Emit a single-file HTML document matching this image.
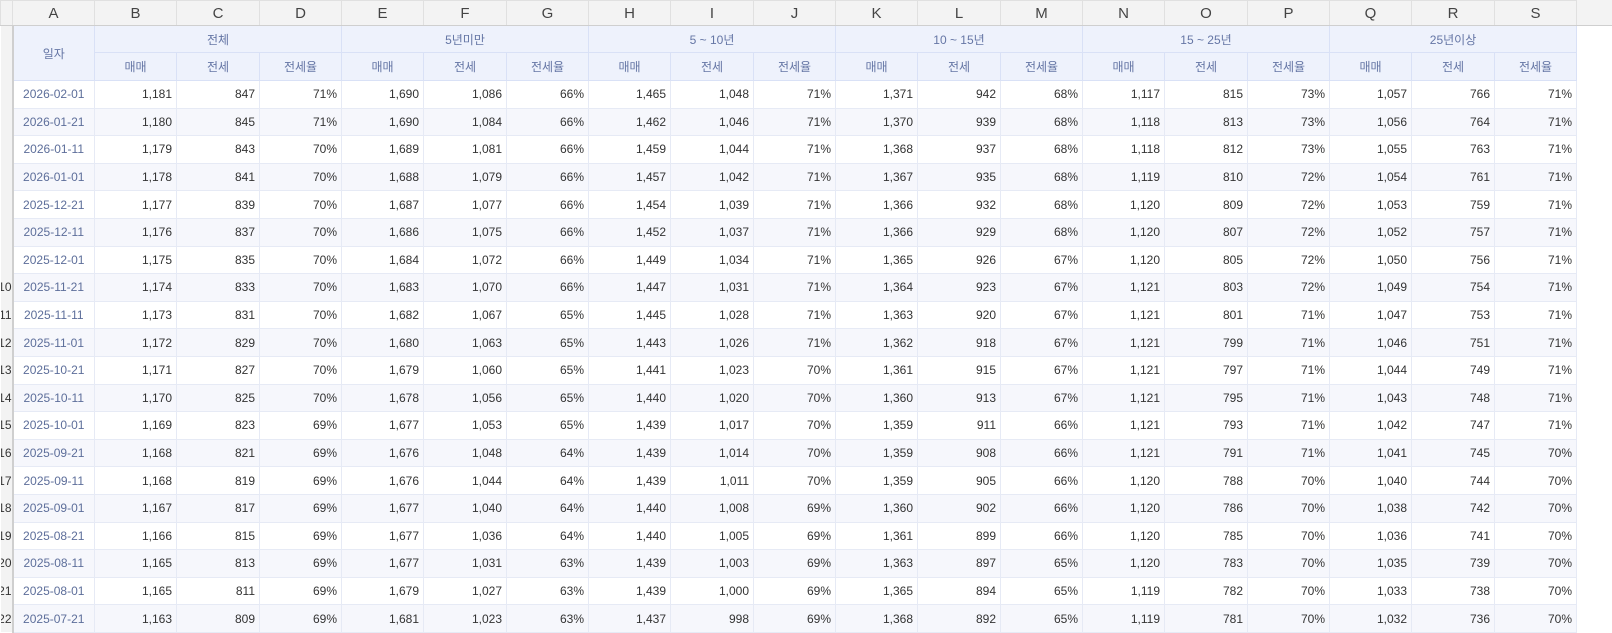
<!DOCTYPE html>
<html><head><meta charset="utf-8"><style>
body{margin:0;width:1612px;height:622px;overflow:hidden;background:#fff;font-family:"Liberation Sans","Noto Sans CJK KR",sans-serif;}
table{border-collapse:collapse;table-layout:fixed;width:1576px;position:absolute;left:0;top:0}
td{padding:0 4px;font-size:12px;color:#333;border:1px solid #e6eaf5;white-space:nowrap;overflow:hidden;text-align:right}
tr.L td{background:#f3f3f3;color:#444;font-size:15px;text-align:center;border:1px solid #e0e0e0;border-bottom:1px solid #cfcfcf;height:24px}
td.rn{background:#f3f3f3;border:none;border-right:2px solid #cfcfcf;padding:0;text-align:right;font-size:12px;color:#333;overflow:hidden;direction:rtl}
tr.h td{background:#eef2fc;color:#6576a5;text-align:center;font-size:12px;border:1px solid #d9e1f6;height:26px}
tr.h td.rn{background:#f3f3f3;border:none;border-right:2px solid #cfcfcf}
tr.d td{height:26.6px}
tr.d td:nth-child(2){text-align:center;color:#5d6e9a}
tr.d:nth-child(even) td{background:#fff}
tr.d:nth-child(odd) td{background:#f6f7fc}
tr.d td.rn{background:#f3f3f3}
.corner{position:relative}
.rest{position:absolute;left:1576px;top:0;width:36px;height:25px;background:#f3f3f3;border-bottom:1px solid #cfcfcf}
</style></head><body>
<div class="rest"></div>
<table>
<colgroup><col style="width:12px"><col style="width:82px"><col style="width:82px"><col style="width:83px"><col style="width:82px"><col style="width:82px"><col style="width:83px"><col style="width:82px"><col style="width:82px"><col style="width:83px"><col style="width:82px"><col style="width:82px"><col style="width:83px"><col style="width:82px"><col style="width:82px"><col style="width:83px"><col style="width:82px"><col style="width:82px"><col style="width:83px"><col style="width:82px"></colgroup>
<tr class="L"><td class="rn" style="border-bottom:1px solid #cfcfcf"></td><td>A</td><td>B</td><td>C</td><td>D</td><td>E</td><td>F</td><td>G</td><td>H</td><td>I</td><td>J</td><td>K</td><td>L</td><td>M</td><td>N</td><td>O</td><td>P</td><td>Q</td><td>R</td><td>S</td></tr>
<tr class="h"><td class="rn"></td><td rowspan="2">일자</td><td colspan="3">전체</td><td colspan="3">5년미만</td><td colspan="3">5 ~ 10년</td><td colspan="3">10 ~ 15년</td><td colspan="3">15 ~ 25년</td><td colspan="3">25년이상</td></tr>
<tr class="h" style="height:28px"><td class="rn"></td><td>매매</td><td>전세</td><td>전세율</td><td>매매</td><td>전세</td><td>전세율</td><td>매매</td><td>전세</td><td>전세율</td><td>매매</td><td>전세</td><td>전세율</td><td>매매</td><td>전세</td><td>전세율</td><td>매매</td><td>전세</td><td>전세율</td></tr>
<tr class="d"><td class="rn"></td><td>2026-02-01</td><td>1,181</td><td>847</td><td>71%</td><td>1,690</td><td>1,086</td><td>66%</td><td>1,465</td><td>1,048</td><td>71%</td><td>1,371</td><td>942</td><td>68%</td><td>1,117</td><td>815</td><td>73%</td><td>1,057</td><td>766</td><td>71%</td></tr>
<tr class="d"><td class="rn"></td><td>2026-01-21</td><td>1,180</td><td>845</td><td>71%</td><td>1,690</td><td>1,084</td><td>66%</td><td>1,462</td><td>1,046</td><td>71%</td><td>1,370</td><td>939</td><td>68%</td><td>1,118</td><td>813</td><td>73%</td><td>1,056</td><td>764</td><td>71%</td></tr>
<tr class="d"><td class="rn"></td><td>2026-01-11</td><td>1,179</td><td>843</td><td>70%</td><td>1,689</td><td>1,081</td><td>66%</td><td>1,459</td><td>1,044</td><td>71%</td><td>1,368</td><td>937</td><td>68%</td><td>1,118</td><td>812</td><td>73%</td><td>1,055</td><td>763</td><td>71%</td></tr>
<tr class="d"><td class="rn"></td><td>2026-01-01</td><td>1,178</td><td>841</td><td>70%</td><td>1,688</td><td>1,079</td><td>66%</td><td>1,457</td><td>1,042</td><td>71%</td><td>1,367</td><td>935</td><td>68%</td><td>1,119</td><td>810</td><td>72%</td><td>1,054</td><td>761</td><td>71%</td></tr>
<tr class="d"><td class="rn"></td><td>2025-12-21</td><td>1,177</td><td>839</td><td>70%</td><td>1,687</td><td>1,077</td><td>66%</td><td>1,454</td><td>1,039</td><td>71%</td><td>1,366</td><td>932</td><td>68%</td><td>1,120</td><td>809</td><td>72%</td><td>1,053</td><td>759</td><td>71%</td></tr>
<tr class="d"><td class="rn"></td><td>2025-12-11</td><td>1,176</td><td>837</td><td>70%</td><td>1,686</td><td>1,075</td><td>66%</td><td>1,452</td><td>1,037</td><td>71%</td><td>1,366</td><td>929</td><td>68%</td><td>1,120</td><td>807</td><td>72%</td><td>1,052</td><td>757</td><td>71%</td></tr>
<tr class="d"><td class="rn"></td><td>2025-12-01</td><td>1,175</td><td>835</td><td>70%</td><td>1,684</td><td>1,072</td><td>66%</td><td>1,449</td><td>1,034</td><td>71%</td><td>1,365</td><td>926</td><td>67%</td><td>1,120</td><td>805</td><td>72%</td><td>1,050</td><td>756</td><td>71%</td></tr>
<tr class="d"><td class="rn">10</td><td>2025-11-21</td><td>1,174</td><td>833</td><td>70%</td><td>1,683</td><td>1,070</td><td>66%</td><td>1,447</td><td>1,031</td><td>71%</td><td>1,364</td><td>923</td><td>67%</td><td>1,121</td><td>803</td><td>72%</td><td>1,049</td><td>754</td><td>71%</td></tr>
<tr class="d"><td class="rn">11</td><td>2025-11-11</td><td>1,173</td><td>831</td><td>70%</td><td>1,682</td><td>1,067</td><td>65%</td><td>1,445</td><td>1,028</td><td>71%</td><td>1,363</td><td>920</td><td>67%</td><td>1,121</td><td>801</td><td>71%</td><td>1,047</td><td>753</td><td>71%</td></tr>
<tr class="d"><td class="rn">12</td><td>2025-11-01</td><td>1,172</td><td>829</td><td>70%</td><td>1,680</td><td>1,063</td><td>65%</td><td>1,443</td><td>1,026</td><td>71%</td><td>1,362</td><td>918</td><td>67%</td><td>1,121</td><td>799</td><td>71%</td><td>1,046</td><td>751</td><td>71%</td></tr>
<tr class="d"><td class="rn">13</td><td>2025-10-21</td><td>1,171</td><td>827</td><td>70%</td><td>1,679</td><td>1,060</td><td>65%</td><td>1,441</td><td>1,023</td><td>70%</td><td>1,361</td><td>915</td><td>67%</td><td>1,121</td><td>797</td><td>71%</td><td>1,044</td><td>749</td><td>71%</td></tr>
<tr class="d"><td class="rn">14</td><td>2025-10-11</td><td>1,170</td><td>825</td><td>70%</td><td>1,678</td><td>1,056</td><td>65%</td><td>1,440</td><td>1,020</td><td>70%</td><td>1,360</td><td>913</td><td>67%</td><td>1,121</td><td>795</td><td>71%</td><td>1,043</td><td>748</td><td>71%</td></tr>
<tr class="d"><td class="rn">15</td><td>2025-10-01</td><td>1,169</td><td>823</td><td>69%</td><td>1,677</td><td>1,053</td><td>65%</td><td>1,439</td><td>1,017</td><td>70%</td><td>1,359</td><td>911</td><td>66%</td><td>1,121</td><td>793</td><td>71%</td><td>1,042</td><td>747</td><td>71%</td></tr>
<tr class="d"><td class="rn">16</td><td>2025-09-21</td><td>1,168</td><td>821</td><td>69%</td><td>1,676</td><td>1,048</td><td>64%</td><td>1,439</td><td>1,014</td><td>70%</td><td>1,359</td><td>908</td><td>66%</td><td>1,121</td><td>791</td><td>71%</td><td>1,041</td><td>745</td><td>70%</td></tr>
<tr class="d"><td class="rn">17</td><td>2025-09-11</td><td>1,168</td><td>819</td><td>69%</td><td>1,676</td><td>1,044</td><td>64%</td><td>1,439</td><td>1,011</td><td>70%</td><td>1,359</td><td>905</td><td>66%</td><td>1,120</td><td>788</td><td>70%</td><td>1,040</td><td>744</td><td>70%</td></tr>
<tr class="d"><td class="rn">18</td><td>2025-09-01</td><td>1,167</td><td>817</td><td>69%</td><td>1,677</td><td>1,040</td><td>64%</td><td>1,440</td><td>1,008</td><td>69%</td><td>1,360</td><td>902</td><td>66%</td><td>1,120</td><td>786</td><td>70%</td><td>1,038</td><td>742</td><td>70%</td></tr>
<tr class="d"><td class="rn">19</td><td>2025-08-21</td><td>1,166</td><td>815</td><td>69%</td><td>1,677</td><td>1,036</td><td>64%</td><td>1,440</td><td>1,005</td><td>69%</td><td>1,361</td><td>899</td><td>66%</td><td>1,120</td><td>785</td><td>70%</td><td>1,036</td><td>741</td><td>70%</td></tr>
<tr class="d"><td class="rn">20</td><td>2025-08-11</td><td>1,165</td><td>813</td><td>69%</td><td>1,677</td><td>1,031</td><td>63%</td><td>1,439</td><td>1,003</td><td>69%</td><td>1,363</td><td>897</td><td>65%</td><td>1,120</td><td>783</td><td>70%</td><td>1,035</td><td>739</td><td>70%</td></tr>
<tr class="d"><td class="rn">21</td><td>2025-08-01</td><td>1,165</td><td>811</td><td>69%</td><td>1,679</td><td>1,027</td><td>63%</td><td>1,439</td><td>1,000</td><td>69%</td><td>1,365</td><td>894</td><td>65%</td><td>1,119</td><td>782</td><td>70%</td><td>1,033</td><td>738</td><td>70%</td></tr>
<tr class="d"><td class="rn">22</td><td>2025-07-21</td><td>1,163</td><td>809</td><td>69%</td><td>1,681</td><td>1,023</td><td>63%</td><td>1,437</td><td>998</td><td>69%</td><td>1,368</td><td>892</td><td>65%</td><td>1,119</td><td>781</td><td>70%</td><td>1,032</td><td>736</td><td>70%</td></tr>
</table>
</body></html>
